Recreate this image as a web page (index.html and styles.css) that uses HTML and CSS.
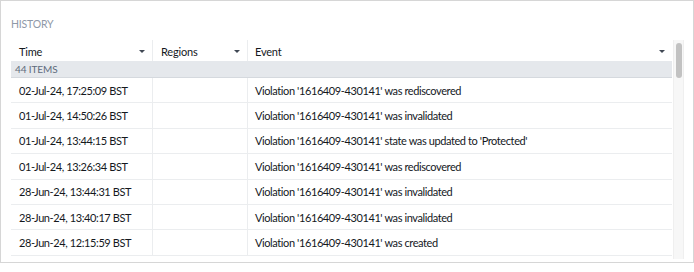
FILE: index.html
```html
<!DOCTYPE html>
<html>
<head>
<meta charset="utf-8">
<link rel="stylesheet" href="styles.css">
</head>
<body>
<div class="panel">
  <div class="title">HISTORY</div>
  <div class="table-wrap">
    <div class="table">
      <div class="row head">
        <div class="cell c-time">Time<span class="caret"></span></div>
        <div class="cell c-reg">Regions<span class="caret"></span></div>
        <div class="cell c-evt">Event<span class="caret"></span></div>
      </div>
      <div class="group">44 ITEMS</div>
      <div class="row">
        <div class="cell c-time">02-Jul-24, 17:25:09 BST</div>
        <div class="cell c-reg"></div>
        <div class="cell c-evt">Violation '1616409-430141' was rediscovered</div>
      </div>
      <div class="row">
        <div class="cell c-time">01-Jul-24, 14:50:26 BST</div>
        <div class="cell c-reg"></div>
        <div class="cell c-evt">Violation '1616409-430141' was invalidated</div>
      </div>
      <div class="row">
        <div class="cell c-time">01-Jul-24, 13:44:15 BST</div>
        <div class="cell c-reg"></div>
        <div class="cell c-evt">Violation '1616409-430141' state was updated to 'Protected'</div>
      </div>
      <div class="row">
        <div class="cell c-time">01-Jul-24, 13:26:34 BST</div>
        <div class="cell c-reg"></div>
        <div class="cell c-evt">Violation '1616409-430141' was rediscovered</div>
      </div>
      <div class="row">
        <div class="cell c-time">28-Jun-24, 13:44:31 BST</div>
        <div class="cell c-reg"></div>
        <div class="cell c-evt">Violation '1616409-430141' was invalidated</div>
      </div>
      <div class="row">
        <div class="cell c-time">28-Jun-24, 13:40:17 BST</div>
        <div class="cell c-reg"></div>
        <div class="cell c-evt">Violation '1616409-430141' was invalidated</div>
      </div>
      <div class="row">
        <div class="cell c-time">28-Jun-24, 12:15:59 BST</div>
        <div class="cell c-reg"></div>
        <div class="cell c-evt">Violation '1616409-430141' was created</div>
      </div>
    </div>
    <div class="scrollbar"><div class="thumb"></div></div>
  </div>
</div>
</body>
</html>
```

FILE: styles.css
```css
* { box-sizing: border-box; }
html, body { margin: 0; padding: 0; background: #fff; }
body {
  font-family: Lato, "Liberation Sans", sans-serif;
  color: #14181d;
  width: 694px;
  height: 272px;
}
.panel {
  width: 694px;
  height: 263px;
  border: 1px solid #d6d6d6;
  padding: 0 9px 0 10px;
}
.title {
  height: 39px;
  padding-top: 17px;
  font-size: 10.5px;
  line-height: 13px;
  color: #8f99a8;
  letter-spacing: -0.2px;
}
.table-wrap {
  display: flex;
  height: 219px;
}
.table {
  width: 662px;
}
.row {
  display: flex;
  height: 25.4px;
  border-bottom: 1px solid #ebedef;
  font-size: 11px;
  letter-spacing: -0.4px;
  align-items: stretch;
}
.row.head {
  height: 21px;
  border-bottom: none;
  letter-spacing: -0.2px;
}
.cell {
  display: flex;
  align-items: center;
  border-right: 1px solid #ebedef;
  white-space: nowrap;
}
.c-time { width: 142px; padding-left: 8px; }
.c-reg { width: 95px; padding-left: 8px; }
.c-evt { flex: 1; padding-left: 7px; border-right: none; }
.head .cell { padding-top: 1px; }
.caret {
  margin-left: auto;
  margin-right: 7px;
  width: 0;
  height: 0;
  border-left: 3.5px solid transparent;
  border-right: 3.5px solid transparent;
  border-top: 3.5px solid #404854;
}
.group {
  height: 17px;
  background: #e5e8ec;
  border-bottom: 1px solid #d5d9de;
  font-size: 10px;
  line-height: 16px;
  color: #5f6b7c;
  padding-left: 4px;
  letter-spacing: -0.1px;
}
.scrollbar {
  width: 11px;
  margin-left: 1px;
  background: #f7f7f7;
  border-left: 1px solid #efefef;
  border-right: 1px solid #efefef;
  padding: 3px 1px 0 2px;
}
.thumb {
  width: 6px;
  height: 35px;
  border-radius: 3px;
  background: #c2c2c2;
}
```
